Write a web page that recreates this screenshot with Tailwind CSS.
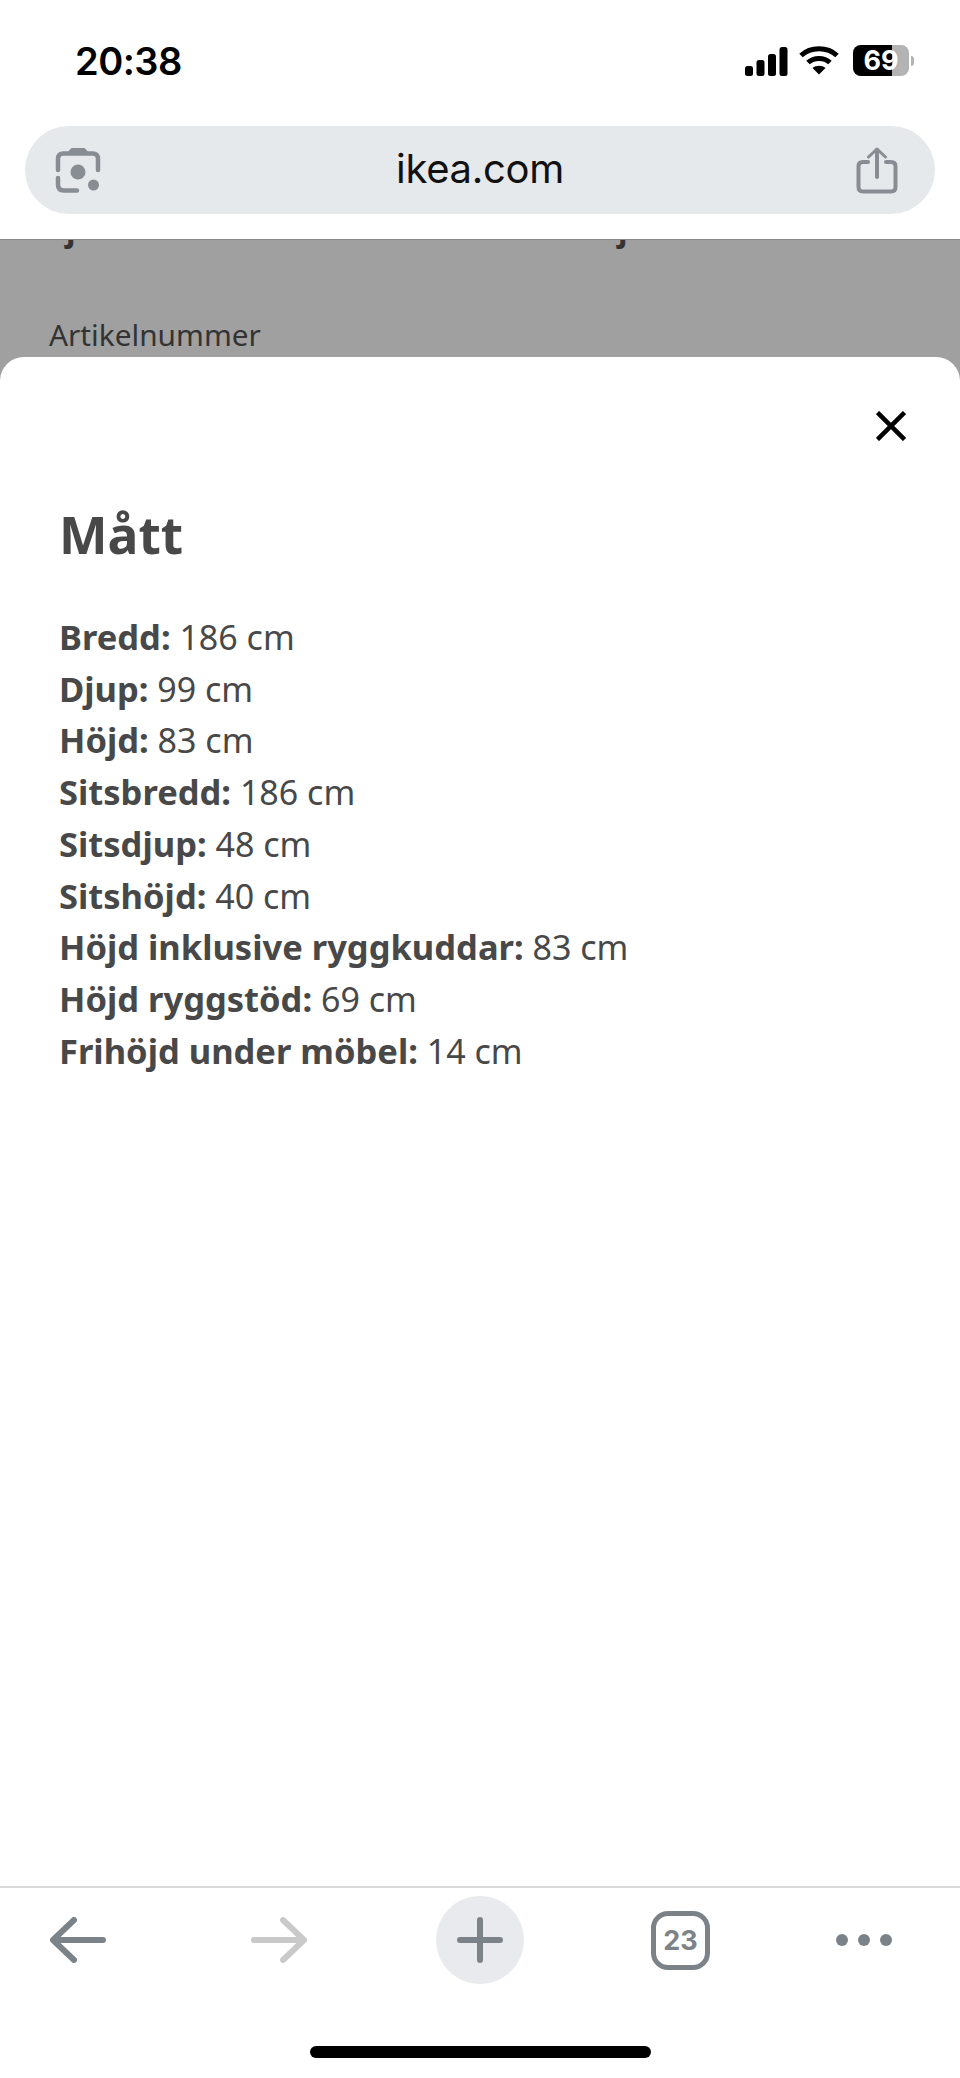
<!DOCTYPE html>
<html lang="sv">
<head>
<meta charset="utf-8">
<script src="https://cdn.jsdelivr.net/npm/@tailwindcss/browser@4"></script>
<title>Mått</title>
</head>
<body class="m-0 bg-white">
<div class="w-[960px] h-[2078px] flex flex-col overflow-hidden bg-white font-['Noto_Sans',sans-serif]">
  <!-- status bar -->
  <div class="h-[126px] shrink-0 relative flex items-start justify-between pl-[75px] pr-[45px] pt-[38px]">
    <span class="font-['Inter',sans-serif] font-semibold text-[38px] leading-[46px] text-black tracking-[-0.5px]">20:38</span>
    <div class="flex items-start gap-[11px] pt-[7px] mr-[1px]">
      <svg width="43" height="30" viewBox="0 0 43 30" class="mt-[2px]"><rect x="0" y="19" width="8" height="10" rx="2.5" fill="#000"/><rect x="11.5" y="13" width="8" height="16" rx="2.5" fill="#000"/><rect x="23" y="7" width="8" height="22" rx="2.5" fill="#000"/><rect x="34.5" y="0" width="8" height="29" rx="2.5" fill="#000"/></svg>
      <svg width="40" height="30" viewBox="0 0 40 30" fill="none"><path d="M2 10.5C11.5 1.5 28.5 1.5 38 10.5" stroke="#000" stroke-width="5"/><path d="M9 17.5C15 12 25 12 31 17.5" stroke="#000" stroke-width="5"/><path d="M20 29.5L13.5 23C17 20 23 20 26.5 23Z" fill="#000"/></svg>
      <div class="flex items-center ml-[3px]">
        <div class="relative w-[56px] h-[31px] rounded-[8px] overflow-hidden bg-[#b3b3b3]">
          <div class="absolute left-0 top-0 bottom-0 w-[39px] bg-black"></div>
          <span class="absolute inset-0 text-center font-['Inter',sans-serif] font-bold text-[27px] leading-[31px] text-white">69</span>
        </div>
        <div class="w-[3px] h-[10px] ml-[2px] rounded-r-full bg-[#b3b3b3]"></div>
      </div>
    </div>
  </div>
  <!-- url bar -->
  <div class="mx-[25px] h-[88px] shrink-0 rounded-full bg-[#e6e9ec] flex items-center justify-between pl-[30px] pr-[37px]">
    <svg width="46" height="46" viewBox="0 0 46 46" fill="none">
      <path d="M3 23V12C3 8.500 5 6.500 8.500 6.500H37.500C41 6.500 43 8.500 43 12V23" stroke="#878d92" stroke-width="4.5" stroke-linecap="round" stroke-linejoin="round"/>
      <path d="M11 7L15 2.500C15.500 1.500 16.500 1 18 1H28C29.500 1 30.500 1.500 31 2.500L35 7Z" fill="#878d92"/>
      <path d="M3 31V37.500C3 41.500 5 43.500 9 43.500H22" stroke="#878d92" stroke-width="4.5" stroke-linecap="round"/>
      <circle cx="23" cy="25" r="7.5" fill="#878d92"/>
      <circle cx="38.5" cy="38" r="5.5" fill="#878d92"/>
    </svg>
    <span class="ml-[3px] -mt-[2px] font-['Inter',sans-serif] text-[40px] leading-[50px] text-[#111] tracking-[-0.3px]">ikea.com</span>
    <svg width="42" height="47" viewBox="0 0 42 47" fill="none">
      <path d="M12 15H7C4 15 2.500 16.500 2.500 19V40C2.500 43 4 44.500 7 44.500H35C38 44.500 39.500 43 39.500 40V19C39.500 16.500 38 15 35 15H30" stroke="#878d92" stroke-width="4" stroke-linecap="round"/>
      <path d="M21 30V3" stroke="#878d92" stroke-width="4" stroke-linecap="round"/>
      <path d="M12.500 10L21 2L29.500 10" stroke="#878d92" stroke-width="3" stroke-linecap="round" stroke-linejoin="round"/>
    </svg>
  </div>
  <div class="h-[25px] shrink-0"></div>
  <!-- dimmed page behind sheet -->
  <div class="relative h-[142px] shrink-0 overflow-hidden bg-[#a0a0a0] border-t border-t-[#8a8a8a]">
    <span class="absolute left-[66px] -top-[33px] font-bold text-[32px] leading-[44px] text-[#333]">j</span>
    <span class="absolute left-[618px] -top-[33px] font-bold text-[32px] leading-[44px] text-[#333]">j</span>
    <div class="absolute left-[49px] top-[75px] text-[29.8px] leading-[40px] text-[#333]">Artikelnummer</div>
  </div>
  <!-- sheet -->
  <div class="flex-1 -mt-[24px] relative rounded-t-[24px] bg-white pl-[59px] pr-[54px] pt-[54px]">
    <div class="flex justify-end">
      <svg width="30" height="30" viewBox="0 0 30 30" fill="none"><path d="M1.500 1.500L28.500 28.500M28.500 1.500L1.500 28.500" stroke="#000" stroke-width="4.500"/></svg>
    </div>
    <h1 class="mt-[58px] font-bold text-[51.5px] leading-[70px] text-[#484848]">Mått</h1>
    <div class="mt-[43px] text-[34px] leading-[51.700px] text-[#484848]">
      <p><b class="font-bold text-[34.5px] leading-none">Bredd:</b> 186 cm</p>
      <p><b class="font-bold text-[34.5px] leading-none">Djup:</b> 99 cm</p>
      <p><b class="font-bold text-[34.5px] leading-none">Höjd:</b> 83 cm</p>
      <p><b class="font-bold text-[34.5px] leading-none">Sitsbredd:</b> 186 cm</p>
      <p><b class="font-bold text-[34.5px] leading-none">Sitsdjup:</b> 48 cm</p>
      <p><b class="font-bold text-[34.5px] leading-none">Sitshöjd:</b> 40 cm</p>
      <p><b class="font-bold text-[34.5px] leading-none">Höjd inklusive ryggkuddar:</b> 83 cm</p>
      <p><b class="font-bold text-[34.5px] leading-none">Höjd ryggstöd:</b> 69 cm</p>
      <p><b class="font-bold text-[34.5px] leading-none">Frihöjd under möbel:</b> 14 cm</p>
    </div>
  </div>
  <!-- browser toolbar -->
  <div class="h-[192px] shrink-0 border-t-2 border-t-[#d9d9d9] bg-white flex flex-col items-center">
    <div class="w-full h-[88px] mt-[8px] flex items-center pl-[50px]">
      <svg width="56" height="46" viewBox="0 0 56 46" fill="none" class="mr-[145px]"><path d="M53 23H3M24 3L3 23L24 43" stroke="#7c8388" stroke-width="6" stroke-linecap="round" stroke-linejoin="round"/></svg>
      <svg width="56" height="46" viewBox="0 0 56 46" fill="none" class="mr-[129px]"><path d="M3 23H53M32 3L53 23L32 43" stroke="#c9c9c9" stroke-width="6" stroke-linecap="round" stroke-linejoin="round"/></svg>
      <div class="w-[88px] h-[88px] rounded-full bg-[#e8eaed] flex items-center justify-center">
        <svg width="46" height="46" viewBox="0 0 46 46" fill="none"><path d="M3 23H43M23 3V43" stroke="#7c8388" stroke-width="6" stroke-linecap="round"/></svg>
      </div>
      <div class="ml-[127px] w-[59px] h-[59px] rounded-[17px] border-[5px] border-[#7c8388] flex items-center justify-center font-['Inter',sans-serif] font-bold text-[27px] leading-none text-[#7c8388]">23</div>
      <div class="ml-[126px] flex items-center gap-[10px]">
        <div class="w-[12px] h-[12px] rounded-full bg-[#7c8388]"></div>
        <div class="w-[12px] h-[12px] rounded-full bg-[#7c8388]"></div>
        <div class="w-[12px] h-[12px] rounded-full bg-[#7c8388]"></div>
      </div>
    </div>
    <div class="mt-[62px] w-[341px] h-[12px] rounded-full bg-black"></div>
  </div>
</div>
</body>
</html>
